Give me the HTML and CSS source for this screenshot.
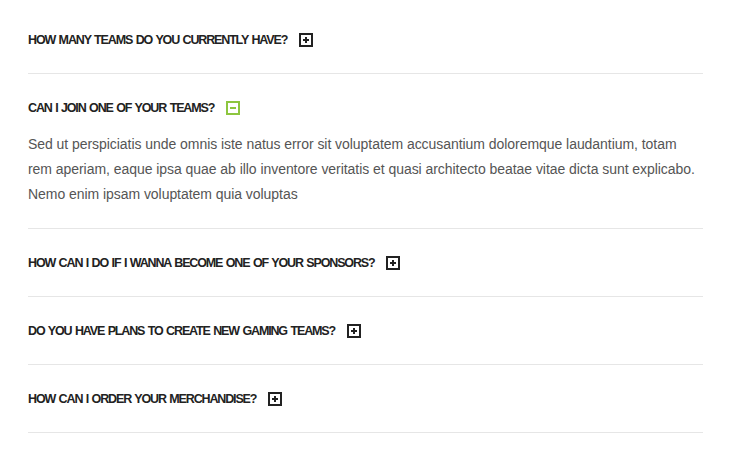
FILE: index.html
```html
<!DOCTYPE html>
<html>
<head>
<meta charset="utf-8">
<link rel="stylesheet" href="styles.css">
</head>
<body>
<div class="faq">
  <div class="item">
    <div class="q"><span class="qt">HOW MANY TEAMS DO YOU CURRENTLY HAVE?</span><span class="ic plus"></span></div>
  </div>
  <div class="item open">
    <div class="q"><span class="qt">CAN I JOIN ONE OF YOUR TEAMS?</span><span class="ic minus"></span></div>
    <p class="a">Sed ut perspiciatis unde omnis iste natus error sit voluptatem accusantium doloremque laudantium, totam<br>rem aperiam, eaque ipsa quae ab illo inventore veritatis et quasi architecto beatae vitae dicta sunt explicabo.<br>Nemo enim ipsam voluptatem quia voluptas</p>
  </div>
  <div class="item">
    <div class="q"><span class="qt">HOW CAN I DO IF I WANNA BECOME ONE OF YOUR SPONSORS?</span><span class="ic plus"></span></div>
  </div>
  <div class="item">
    <div class="q"><span class="qt">DO YOU HAVE PLANS TO CREATE NEW GAMING TEAMS?</span><span class="ic plus"></span></div>
  </div>
  <div class="item">
    <div class="q"><span class="qt">HOW CAN I ORDER YOUR MERCHANDISE?</span><span class="ic plus"></span></div>
  </div>
</div>
</body>
</html>
```
FILE: styles.css
```css
html, body { margin: 0; padding: 0; background: #fff; }
.faq { margin: 0 28px; padding-top: 6px; width: 675px; }
.item { border-bottom: 1px solid #e6e6e6; padding: 26px 0 26px; }
.q { display: flex; align-items: center; height: 15px; }
.qt { font-family: "Liberation Sans", Arial, sans-serif; font-weight: bold; font-size: 12.5px; color: #222; letter-spacing: -1.15px; word-spacing: 1.2px; }
.ic { position: relative; width: 10px; height: 10px; border: 2px solid #222; margin-left: 12px; box-sizing: content-box; flex: none; }
.ic::before, .ic::after { content: ""; position: absolute; background: #222; }
.ic::before { left: 2px; right: 2px; top: 4px; height: 2px; }
.ic::after { top: 2px; bottom: 2px; left: 4px; width: 2px; }
.ic.minus { border-color: #8dc63f; }
.ic.minus::before { background: #8dc63f; }
.ic.minus::after { display: none; }
.a { margin: 17px 0 0; font-family: "Liberation Sans", Arial, sans-serif; font-size: 14px; letter-spacing: -0.05px; line-height: 25px; color: #555; white-space: nowrap; }
.open { padding-bottom: 21px; }
```
